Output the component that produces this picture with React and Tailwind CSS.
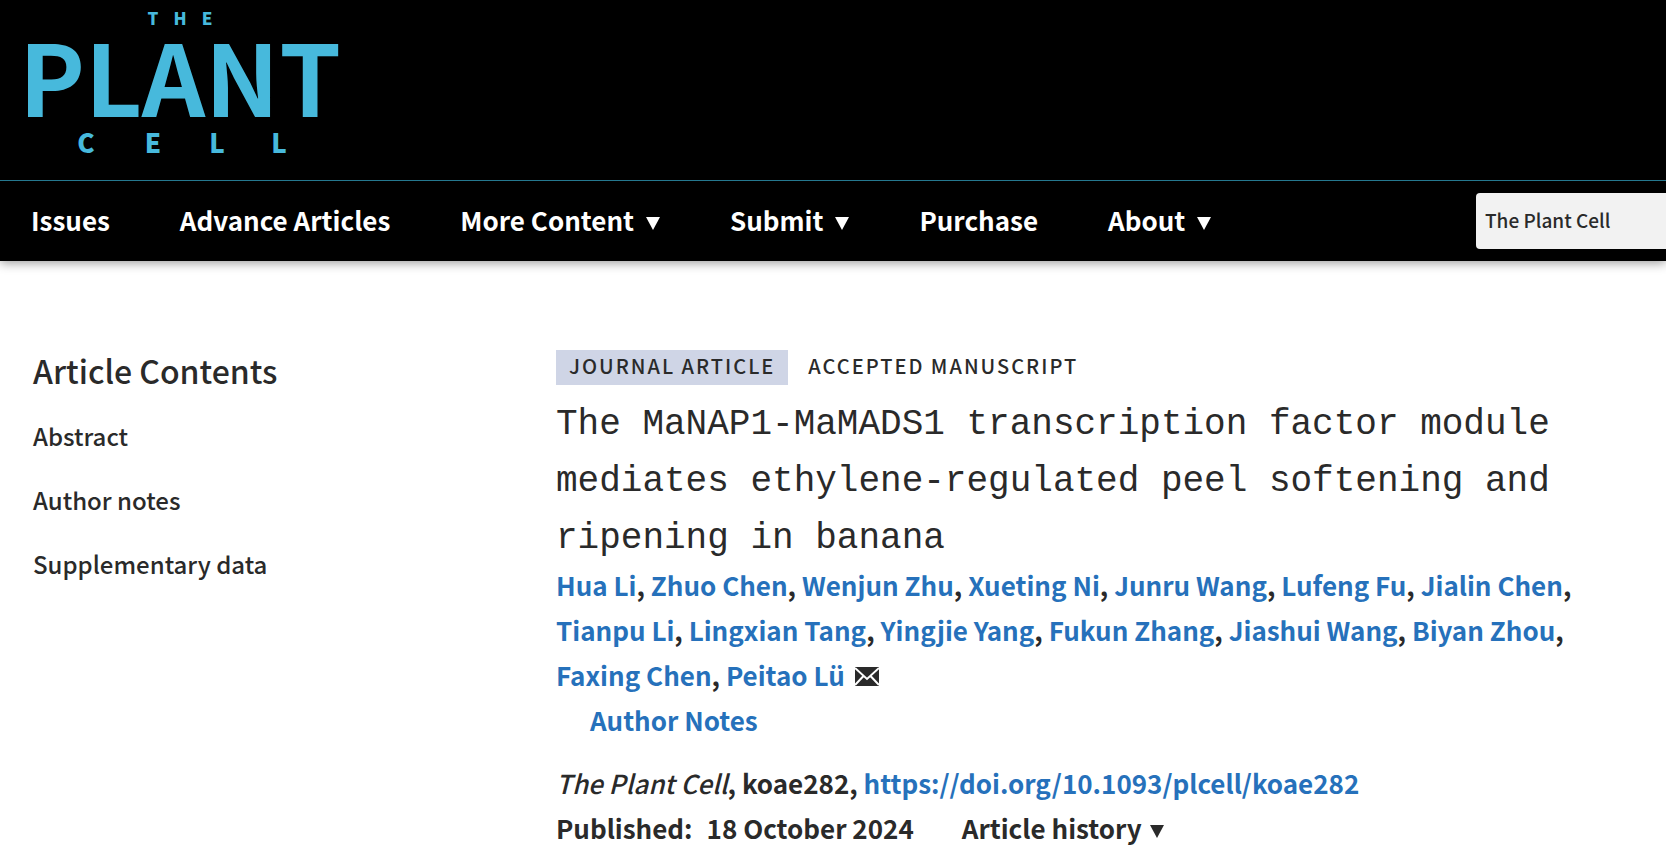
import { Fragment } from 'react';

const navItems = [
  { label: 'Issues' },
  { label: 'Advance Articles' },
  { label: 'More Content', menu: true },
  { label: 'Submit', menu: true },
  { label: 'Purchase' },
  { label: 'About', menu: true },
];

const sections = ['Abstract', 'Author notes', 'Supplementary data'];

const authors = [
  'Hua Li',
  'Zhuo Chen',
  'Wenjun Zhu',
  'Xueting Ni',
  'Junru Wang',
  'Lufeng Fu',
  'Jialin Chen',
  'Tianpu Li',
  'Lingxian Tang',
  'Yingjie Yang',
  'Fukun Zhang',
  'Jiashui Wang',
  'Biyan Zhou',
  'Faxing Chen',
  'Peitao Lü',
];

function Caret({ className }) {
  return (
    <svg viewBox="0 0 14 13" className={className} fill="currentColor" aria-hidden="true">
      <path d="M0 0h14L7 13z" />
    </svg>
  );
}

function Envelope() {
  return (
    <svg viewBox="0 0 24 19" className="inline-block w-6 h-[19px] ml-[10px] align-baseline" aria-hidden="true">
      <path fill="#2a2a2a" d="M0 0h24v19H0z" />
      <path fill="none" stroke="#fff" strokeWidth="2" d="M0 1l12 11L24 1M0 18l8.500-9M24 18l-8.500-9" />
    </svg>
  );
}

function Logo() {
  return (
    <a href="#home" aria-label="The Plant Cell" className="block w-[320px] font-black">
      <svg viewBox="0 0 320 164" className="w-full overflow-visible" fill="#47b9dc" textAnchor="middle">
        <text x="133 160 187" y="25" fontSize="17">THE</text>
        <text x="160" y="117" fontSize="99" className="font-bold">PLANT</text>
        <text x="66 133 197 259" y="153" fontSize="26">CELL</text>
      </svg>
    </a>
  );
}

export default function App() {
  return (
    <div className="min-h-screen overflow-hidden bg-white font-['Noto_Sans_CJK_SC',sans-serif] font-medium text-[#2a2a2a]">
      <header className="bg-black shadow-[0_2px_10px_rgba(0,0,0,0.4)]">
        <div className="h-[180px] pl-5">
          <Logo />
        </div>

        <div className="flex h-[81px] items-center border-t border-[#25788f] pl-[31px]">
          <nav className="flex gap-[70px] pb-1 text-[26px] font-bold text-white">
            {navItems.map(({ label, menu }) =>
              menu ? (
                <button key={label} type="button" className="flex items-center gap-3 whitespace-nowrap">
                  {label}
                  <Caret className="w-[14px] h-[13px] mt-[8px]" />
                </button>
              ) : (
                <a key={label} href="#nav" className="whitespace-nowrap">
                  {label}
                </a>
              )
            )}
          </nav>
          <select
            aria-label="Search scope"
            className="ml-auto h-14 w-[190px] appearance-none rounded-l bg-[#f2f2f2] px-[9px] pb-0.5 text-[19px] text-[#2a2a2a]"
          >
            <option>The Plant Cell</option>
          </select>
        </div>
      </header>

      <div className="flex pl-[33px] pr-[84px] pt-[89px]">
        <aside className="w-[523px] shrink-0">
          <h2 className="text-[32px] leading-[40px]">Article Contents</h2>
          <ul className="mt-[14px] text-[24px] leading-[64px]">
            {sections.map((name) => (
              <li key={name}>
                <a href="#section">{name}</a>
              </li>
            ))}
          </ul>
        </aside>

        <main className="min-w-0 flex-1">
          <div className="flex items-center gap-5 text-[20px] leading-[32px] tracking-[2px]">
            <span className="bg-[#cfd5e6] px-[13px] pb-[3px]">JOURNAL ARTICLE</span>
            <span className="pb-[3px]">ACCEPTED MANUSCRIPT</span>
          </div>

          <h1 className="mt-[11px] font-['NSimSun','Liberation_Mono',monospace] text-[36px] leading-[57px] font-normal">
            The MaNAP1-MaMADS1 transcription factor module <br />
            mediates ethylene-regulated peel softening and <br />
            ripening in banana
          </h1>

          <div className="-mt-[5px] text-[26px] leading-[45px] font-bold">
            <p>
              {authors.map((name, i) => (
                <Fragment key={name}>
                  {i > 0 && ', '}
                  <a href="#author" className="whitespace-nowrap text-[#2671bb]">
                    {name}
                  </a>
                </Fragment>
              ))}
              <Envelope />
            </p>
            <a href="#notes" className="ml-[34px] text-[#2671bb]">
              Author Notes
            </a>

            <p className="mt-[18px]">
              <em className="font-medium">The Plant Cell</em>, koae282,{' '}
              <a href="https://doi.org/10.1093/plcell/koae282" className="text-[#2671bb]">
                https://doi.org/10.1093/plcell/koae282
              </a>
            </p>
            <div className="flex items-center">
              <span>Published:</span>
              <span className="ml-[14px]">18 October 2024</span>
              <button type="button" className="ml-12 flex items-center gap-2">
                Article history
                <Caret className="w-[14px] h-[13px] mt-[8px]" />
              </button>
            </div>
          </div>
        </main>
      </div>
    </div>
  );
}
